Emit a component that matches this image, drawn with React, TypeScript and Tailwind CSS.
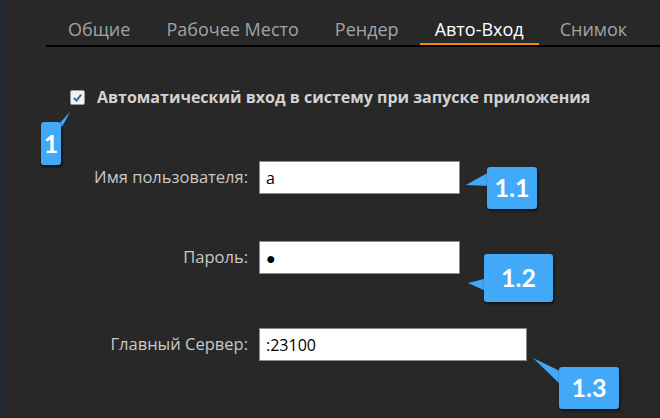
import { useState } from 'react';

const tabs = ['Общие', 'Рабочее Место', 'Рендер', 'Авто-Вход', 'Снимок'];

function Badge({ label, className }: { label: string; className: string }) {
  return (
    <div
      className={`absolute bg-[#42a8f8] rounded-[3px] shadow-[1px_2px_3px_rgba(0,0,0,0.6)] flex items-center justify-center text-white font-bold text-[25px] ${className}`}
      style={{ fontFamily: 'Lato, "Open Sans", sans-serif' }}
    >
      {label}
    </div>
  );
}

function Field({ label, value, width }: { label: string; value: string; width: string }) {
  return (
    <div className="flex items-center">
      <div className="w-[247px] text-right text-[16.5px] text-[#c9c9c9]">{label}</div>
      <div className={`ml-[11px] h-[33px] bg-white border border-[#8a8a8a] flex items-center px-[6px] text-[16px] text-black ${width}`}>
        {value}
      </div>
    </div>
  );
}

export default function App() {
  const [active] = useState(3);

  return (
    <div className="relative w-[660px] h-[418px] overflow-hidden bg-[#282828] border-l border-[#1c2a3a]" style={{ fontFamily: '"Open Sans", "Noto Sans", sans-serif' }}>
      {/* Tab bar */}
      <div className="ml-[45px] h-[47px] border-b-2 border-black flex items-end gap-[6px] pl-[7px]">
        {tabs.map((t, i) => (
          <div
            key={t}
            className={`shrink-0 whitespace-nowrap px-[15px] text-[18px] leading-[27px] border-b-2 ${i === active ? 'text-white border-[#f0880a]' : 'text-[#a3a3a3] border-transparent'}`}
          >
            {t}
          </div>
        ))}
      </div>

      {/* Auto login checkbox */}
      <div className="mt-[38px] ml-[69px] flex items-center gap-[12px]">
        <div className="w-[15px] h-[15px] bg-[#f2f2f2] border border-[#9a9a9a] rounded-[2px] flex items-center justify-center">
          <svg width="11" height="11" viewBox="0 0 12 12">
            <path d="M2 6.5 L5 9.2 L10 2.8" fill="none" stroke="#3a6ea8" strokeWidth="2.2" />
          </svg>
        </div>
        <span className="text-[16px] font-bold text-[#d2d2d2]">Автоматический вход в систему при запуске приложения</span>
      </div>

      {/* Fields */}
      <div className="mt-[52px] flex flex-col gap-[47px]">
        <Field label="Имя пользователя:" value="a" width="w-[201px]" />
        <Field label="Пароль:" value="●" width="w-[201px]" />
        <div className="mt-[7px]">
          <Field label="Главный Сервер:" value=":23100" width="w-[268px]" />
        </div>
      </div>

      {/* Annotation callouts */}
      <svg className="absolute left-0 top-0" width="660" height="418">
        <polygon points="69,112 58,124 61,127" fill="#42a8f8" />
        <polygon points="465,185 490,171 490,186" fill="#42a8f8" />
        <polygon points="467,283 487,278 487,292" fill="#42a8f8" />
        <polygon points="532,358 561,372 561,386" fill="#42a8f8" />
      </svg>
      <Badge label="1" className="left-[40px] top-[122px] w-[20px] h-[43px]" />
      <Badge label="1.1" className="left-[486px] top-[167px] w-[50px] h-[42px]" />
      <Badge label="1.2" className="left-[483px] top-[254px] w-[69px] h-[48px]" />
      <Badge label="1.3" className="left-[558px] top-[367px] w-[60px] h-[42px]" />
    </div>
  );
}
